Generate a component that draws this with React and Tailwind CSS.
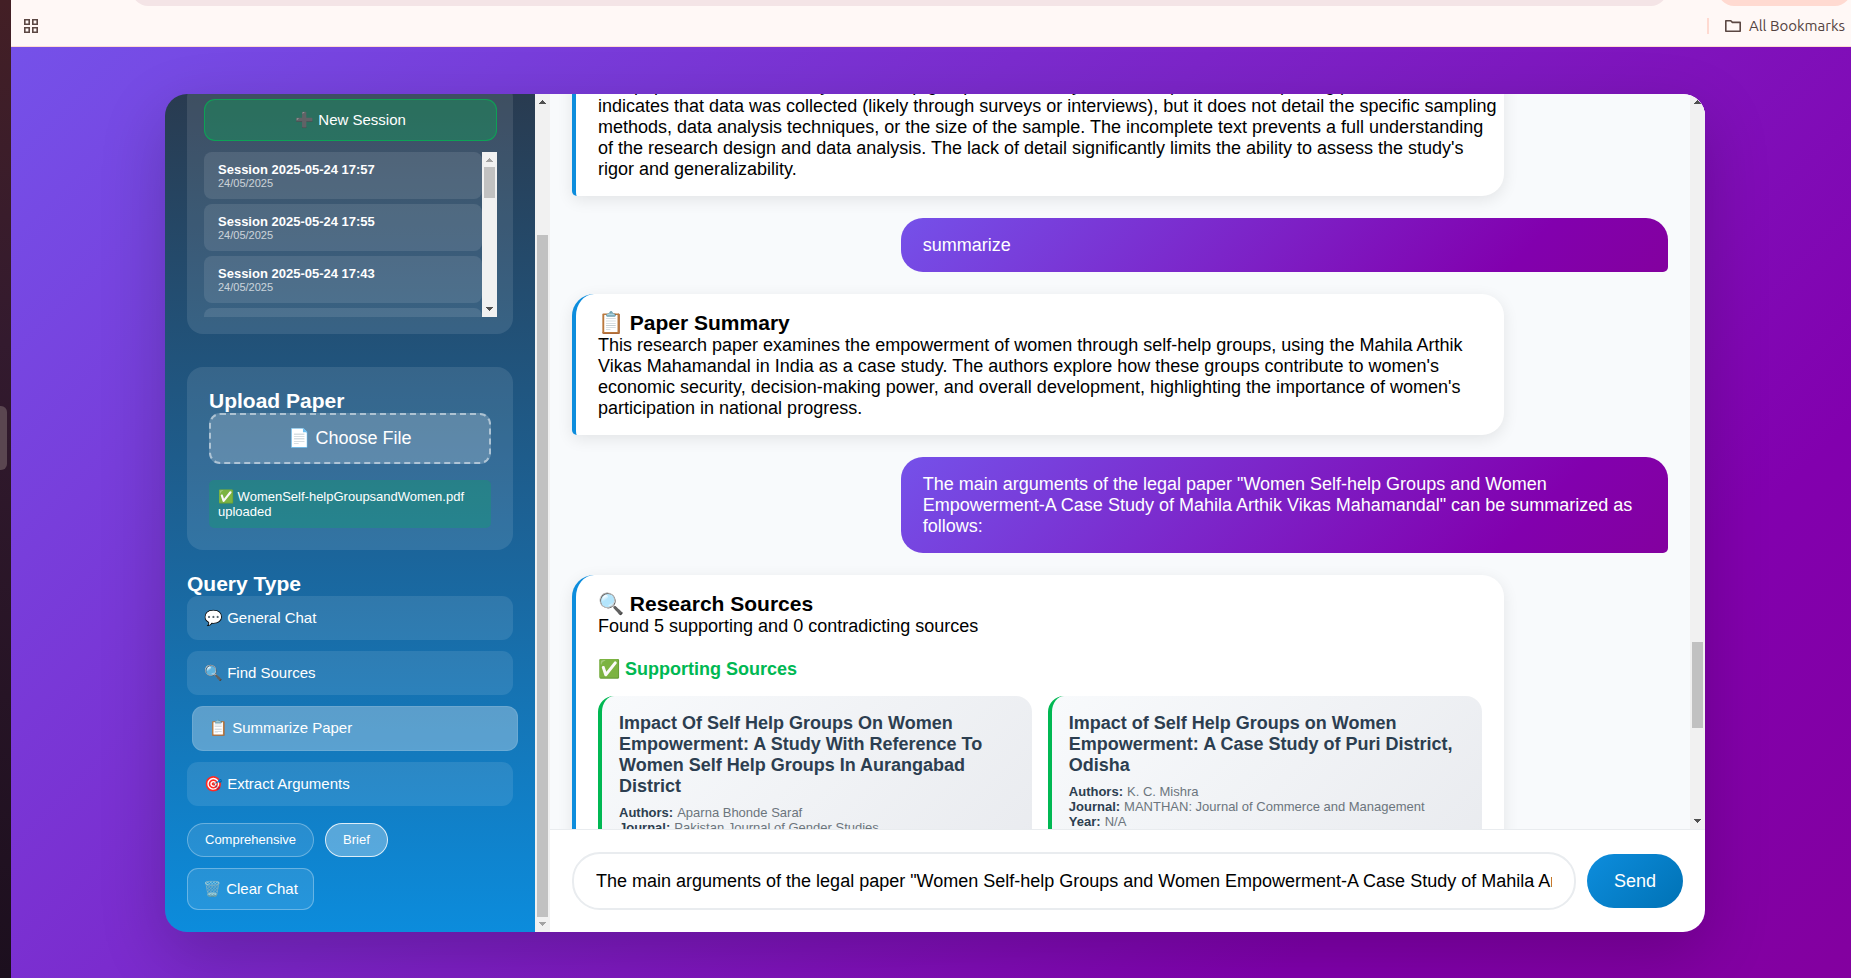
const UI = "font-['Liberation_Sans',Arial,sans-serif]";

function Arrow({ up, dim }) {
  return (
    <svg viewBox="0 0 7 4" className="h-1 w-[7px] shrink-0" shapeRendering="crispEdges" aria-hidden="true">
      <path d={up ? "M3 0h1v1h1v1h1v1h1v1H0V3h1V2h1V1h1z" : "M0 0h7v1H6v1H5v1H4v1H3V3H2V2H1V1H0z"} fill={dim ? "#a3a3a3" : "#505050"} />
    </svg>
  );
}

function ScrollBar({ before, thumb, after, upDim, downDim, width }) {
  return (
    <div className={`flex shrink-0 flex-col items-center bg-[#f1f1f1] py-[6px] ${width}`} aria-hidden="true">
      <Arrow up dim={upDim} />
      <div className="flex w-full flex-1 flex-col items-stretch px-[2px] py-[5px]">
        <div style={{ flexGrow: before }} />
        <div className="bg-[#c1c1c1]" style={{ flexGrow: thumb }} />
        <div style={{ flexGrow: after }} />
      </div>
      <Arrow dim={downDim} />
    </div>
  );
}

const sessions = [
  "Session 2025-05-24 17:57",
  "Session 2025-05-24 17:55",
  "Session 2025-05-24 17:43",
];

const queryTypes = [
  { label: "💬 General Chat" },
  { label: "🔍 Find Sources" },
  { label: "📋 Summarize Paper", active: true },
  { label: "🎯 Extract Arguments" },
];

function Sidebar() {
  return (
    <aside className="flex w-[385px] shrink-0 text-white">
      <div className="flex min-w-0 flex-1 flex-col justify-end overflow-hidden bg-linear-to-b/srgb from-[#293b50] via-[#1b659b] via-55% to-[#0c8cdc] px-[22px] pb-[22px]">
        <section className="mb-[33px] shrink-0 rounded-2xl bg-white/10 py-[17px] pr-4 pl-[17px]">
          <button className="flex h-[42px] w-full items-center justify-center rounded-[11px] border border-[#00b853]/70 bg-[#00b853]/30 text-[15px]">
            <span className="whitespace-pre">➕ New Session</span>
          </button>
          <div className="mt-[11px] flex h-[165px] overflow-hidden">
            <ul className="flex min-w-0 flex-1 flex-col gap-[5px]">
              {sessions.map((s) => (
                <li key={s} className="shrink-0">
                  <button className="block h-[47px] w-full rounded-lg bg-white/10 px-[14px] text-left">
                    <span className="block text-[13px] leading-[15px] font-bold">{s}</span>
                    <span className="block text-[11px] leading-[12px] opacity-70">24/05/2025</span>
                  </button>
                </li>
              ))}
              <li className="h-[47px] shrink-0 rounded-lg bg-white/10" />
            </ul>
            <ScrollBar width="w-[15px]" before={0} thumb={31} after={104} upDim />
          </div>
        </section>

        <section className="mb-[22px] shrink-0 rounded-2xl bg-white/10 p-[22px]">
          <h2 className="text-[21px] leading-6 font-bold">Upload Paper</h2>
          <button className="flex h-[51px] w-full items-center justify-center rounded-[11px] border-2 border-dashed border-white/50 bg-white/20 text-[18px]">
            📄 Choose File
          </button>
          <p className="mt-4 rounded-[5px] bg-[#00b853]/25 p-[9px] text-[13px] leading-[15px]">
            ✅ WomenSelf-helpGroupsandWomen.pdf uploaded
          </p>
        </section>

        <section className="shrink-0">
          <h2 className="text-[21px] leading-6 font-bold">Query Type</h2>
          <ul className="flex flex-col gap-[11px]">
            {queryTypes.map((q) => (
              <li key={q.label} className={q.active ? "translate-x-[5px]" : ""}>
                <button
                  className={`block w-full rounded-[11px] border px-4 text-left text-[15px] ${
                    q.active ? "h-[45px] border-white/10 bg-white/30" : "h-[44px] border-transparent bg-white/10"
                  }`}
                >
                  {q.label}
                </button>
              </li>
            ))}
          </ul>
          <div className="mt-[17px] flex gap-[11px] text-[13px]">
            <button className="h-[34px] rounded-full border border-white/30 bg-white/10 px-[17px]">Comprehensive</button>
            <button className="h-[34px] rounded-full border border-white/80 bg-white/30 px-[17px]">Brief</button>
          </div>
          <button className="mt-[11px] h-[42px] rounded-[11px] border border-white/30 bg-white/10 px-[15px] text-[15px]">🗑️ Clear Chat</button>
        </section>
      </div>
      <ScrollBar width="w-[15px]" before={126} thumb={682} after={0} downDim />
    </aside>
  );
}

function BotMessage({ children }) {
  return (
    <article className="w-[85%] shrink-0 rounded-[22px] rounded-bl-[5px] border-l-4 border-[#0d8ddd] bg-white px-[22px] pt-[17px] pb-4 shadow-[0_4px_16px_rgba(0,0,0,0.09)]">
      {children}
    </article>
  );
}

function UserMessage({ children }) {
  return (
    <article className="w-[70%] shrink-0 self-end rounded-[22px] rounded-br-[5px] bg-linear-135/srgb from-[#7551e9] via-[#8200ae] via-80% to-[#83009f] px-[22px] pt-[17px] pb-4 text-white">
      {children}
    </article>
  );
}

function SourceCard({ title, meta }) {
  return (
    <section className="flex-1 rounded-2xl border-l-4 border-[#00b853] bg-linear-135/srgb from-[#f8fafc] to-[#e9ebef] p-[17px]">
      <h4 className="font-bold whitespace-pre text-[#2c3e50]">{title}</h4>
      <dl className="mt-2 text-[13px] leading-[15px] text-[#6c757d]">
        {meta.map(([k, v]) => (
          <div key={k} className="flex gap-1">
            <dt className="font-bold text-[#2c3e50]">{k}:</dt>
            <dd>{v}</dd>
          </div>
        ))}
      </dl>
    </section>
  );
}

function Chat() {
  return (
    <main className="flex min-w-0 flex-1 flex-col bg-white">
      <div className="flex min-h-0 flex-1 bg-[#f8fafc]">
        <div className="flex min-w-0 flex-1 flex-col gap-[22px] overflow-hidden px-[22px] text-[18px] leading-[21px] text-black">
          <div className="-mt-9 flex shrink-0 flex-col">
            <BotMessage>
              <p className="whitespace-pre">
                {`The paper uses a case study of self-help groups. The survey of the sample and the reporting period\nindicates that data was collected (likely through surveys or interviews), but it does not detail the specific sampling\nmethods, data analysis techniques, or the size of the sample. The incomplete text prevents a full understanding\nof the research design and data analysis. The lack of detail significantly limits the ability to assess the study's\nrigor and generalizability.`}
              </p>
            </BotMessage>
          </div>
          <UserMessage>
            <p>summarize</p>
          </UserMessage>
          <BotMessage>
            <h3 className="text-[21px] leading-6 font-bold">📋 Paper Summary</h3>
            <p className="whitespace-pre">
              {`This research paper examines the empowerment of women through self-help groups, using the Mahila Arthik\nVikas Mahamandal in India as a case study. The authors explore how these groups contribute to women's\neconomic security, decision-making power, and overall development, highlighting the importance of women's\nparticipation in national progress.`}
            </p>
          </BotMessage>
          <UserMessage>
            <p className="whitespace-pre">
              {`The main arguments of the legal paper "Women Self-help Groups and Women\nEmpowerment-A Case Study of Mahila Arthik Vikas Mahamandal" can be summarized as\nfollows:`}
            </p>
          </UserMessage>
          <BotMessage>
            <h3 className="text-[21px] leading-6 font-bold">🔍 Research Sources</h3>
            <p>Found 5 supporting and 0 contradicting sources</p>
            <h3 className="mt-[22px] font-bold text-[#00b853]">✅ Supporting Sources</h3>
            <div className="mt-4 flex gap-4">
              <SourceCard
                title={"Impact Of Self Help Groups On Women\nEmpowerment: A Study With Reference To\nWomen Self Help Groups In Aurangabad\nDistrict"}
                meta={[["Authors", "Aparna Bhonde Saraf"], ["Journal", "Pakistan Journal of Gender Studies"]]}
              />
              <SourceCard
                title={"Impact of Self Help Groups on Women\nEmpowerment: A Case Study of Puri District,\nOdisha"}
                meta={[["Authors", "K. C. Mishra"], ["Journal", "MANTHAN: Journal of Commerce and Management"], ["Year", "N/A"]]}
              />
            </div>
          </BotMessage>
        </div>
        <ScrollBar width="w-[15px]" before={533} thumb={86} after={86} />
      </div>
      <form className="flex items-center gap-[11px] border-t border-[#e9ecef] p-[22px]" onSubmit={(e) => e.preventDefault()}>
        <input
          type="text"
          aria-label="Message"
          defaultValue={'The main arguments of the legal paper "Women Self-help Groups and Women Empowerment-A Case Study of Mahila Arthik Vikas Mahamandal" can be summarized as follows:'}
          className="h-[58px] min-w-0 flex-1 rounded-[28px] border-2 border-[#e9ecef] bg-white px-[22px] text-[18px] text-black outline-none"
        />
        <button className="h-[54px] rounded-[28px] bg-linear-135/srgb from-[#0d8ddd] to-[#0072b5] px-[27px] text-[18px] text-white">Send</button>
      </form>
    </main>
  );
}

function BrowserBar() {
  return (
    <header className="flex h-[47px] shrink-0 flex-col border-b border-[#ffdcd2] bg-[#fff8f6]">
      <div className="flex h-[6px] items-end gap-[51px] overflow-hidden pl-[121px]">
        <div className="h-9 flex-1 rounded-b-2xl bg-[#f4e4e6]" />
        <div className="h-9 w-[133px] rounded-b-2xl bg-[#ffdad1]" />
      </div>
      <nav className="flex flex-1 items-center justify-between pr-[6px] pl-[13px] text-[15px] text-[#54433f]">
        <button aria-label="Apps">
          <svg viewBox="0 0 14 14" className="h-[14px] w-[14px]" fill="none" stroke="#5b4743" strokeWidth="1.6" aria-hidden="true">
            <path d="M.8.8h4.4v4.4H.8zM8.8.8h4.4v4.4H8.8zM.8 8.8h4.4v4.4H.8zM8.8 8.8h4.4v4.4H8.8z" />
          </svg>
        </button>
        <button className="flex items-center gap-2">
          <span className="mr-2 h-4 w-[2px] bg-[#ffdad1]" />
          <svg viewBox="0 0 16 12" className="h-3 w-4" fill="none" stroke="#5b4743" strokeWidth="1.6" strokeLinejoin="round" aria-hidden="true">
            <path d="M.8.8h5l1.6 1.6h7.8v8.8H.8z" />
          </svg>
          <span className="font-['Ubuntu','Noto_Sans',sans-serif]">All Bookmarks</span>
        </button>
      </nav>
    </header>
  );
}

export default function App() {
  return (
    <div className={`flex h-screen overflow-hidden ${UI}`}>
      <div className="flex w-[11px] shrink-0 flex-col bg-linear-to-b from-[#431f25] via-[#331a2e] via-35% to-[#1c0f1e]">
        <div className="h-[406px]" />
        <div className="h-16 w-[7px] rounded-r-md bg-[#5a4650]" />
      </div>
      <div className="flex min-w-0 flex-1 flex-col">
        <BrowserBar />
        <div className="flex min-h-0 flex-1 bg-linear-135/srgb from-[#7551e9] via-[#8200ae] via-80% to-[#83009f] pt-[47px] pr-[146px] pb-[46px] pl-[154px]">
          <div className="flex min-w-0 flex-1 overflow-hidden rounded-[22px] shadow-[0_22px_66px_rgba(0,0,0,0.2)]">
            <Sidebar />
            <Chat />
          </div>
        </div>
      </div>
    </div>
  );
}
